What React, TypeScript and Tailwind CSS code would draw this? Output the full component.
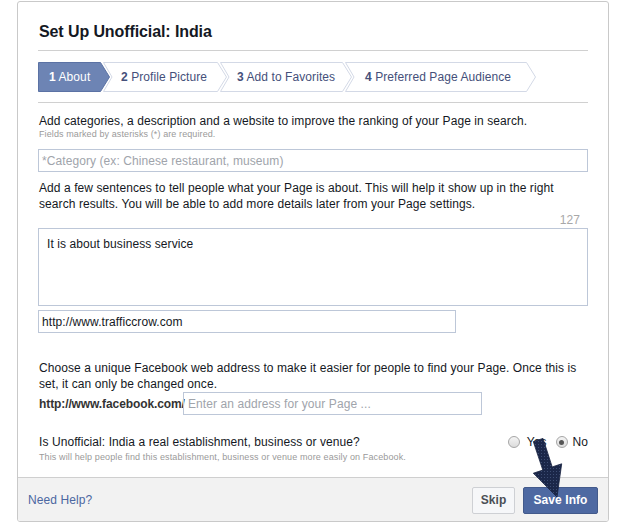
import React from 'react'

interface Step {
  num: string
  label: string
  width: number
  pl: number
}

const steps: Step[] = [
  { num: '1', label: 'About', width: 72, pl: 11 },
  { num: '2', label: 'Profile Picture', width: 124, pl: 18 },
  { num: '3', label: 'Add to Favorites', width: 132, pl: 17 },
  { num: '4', label: 'Preferred Page Audience', width: 191, pl: 20 },
]

function StepTab({ step, index }: { step: Step; index: number }) {
  const active = index === 0
  const W = step.width
  const pts =
    index === 0
      ? `0.5,0.5 ${W - 9.5},0.5 ${W - 0.5},15 ${W - 9.5},29.5 0.5,29.5`
      : `0.5,0.5 ${W - 9.5},0.5 ${W - 0.5},15 ${W - 9.5},29.5 0.5,29.5 9,15`
  return (
    <div
      className={`relative h-[30px] flex items-center shrink-0 ${index > 0 ? '-ml-[7px]' : ''}`}
      style={{ width: W, paddingLeft: step.pl }}
    >
      <svg className="absolute inset-0" width={W} height={30}>
        <polygon
          points={pts}
          fill={active ? '#6d84b4' : '#ffffff'}
          stroke={active ? '#5b72a4' : '#d3d9e6'}
          strokeWidth="1"
        />
      </svg>
      <span className={`relative text-[12px] whitespace-nowrap ${active ? 'text-white' : 'text-[#45507a]'}`}>
        <span className="font-bold">{step.num}</span> {step.label}
      </span>
    </div>
  )
}

function Radio({ checked }: { checked?: boolean }) {
  return (
    <span className="w-[12px] h-[12px] rounded-full border border-[#a6a6a6] bg-gradient-to-b from-[#f4f4f4] to-[#dcdcdc] flex items-center justify-center">
      {checked && <span className="w-[5px] h-[5px] rounded-full bg-[#555]" />}
    </span>
  )
}

export default function App() {
  return (
    <div className="relative w-[624px] h-[523px] bg-white pt-px pl-[17px] font-['Liberation_Sans',Arial,sans-serif] text-[#141823] tracking-[0.08px]">
      <div className="w-[592px] h-[521px] border border-[#c9c9c9] rounded-[3px] flex flex-col overflow-hidden">
        {/* Header + body */}
        <div className="flex-1 px-[20px]">
          <h2 className="pt-[20px] pb-[8px] text-[16px] leading-[20px] font-bold tracking-[-0.1px] border-b border-[#d0d0d0] pl-px">
            Set Up Unofficial: India
          </h2>

          {/* Steps */}
          <div className="pt-[11px] pb-[10px] border-b border-[#d0d0d0] flex">
            {steps.map((s, i) => (
              <StepTab key={s.num} step={s} index={i} />
            ))}
          </div>

          <p className="mt-[10px] text-[12px] leading-[16px] pl-px">
            Add categories, a description and a website to improve the ranking of your Page in search.
          </p>
          <p className="text-[9px] leading-[11px] tracking-[0.1px] text-[#9a9a9a] pl-px">
            Fields marked by asterisks (*) are required.
          </p>

          <div className="mt-[9px] h-[23px] border border-[#bdc7d8] px-[3px] flex items-center text-[12px] text-[#a0a4ab]">
            *Category (ex: Chinese restaurant, museum)
          </div>

          <p className="mt-[8px] text-[12px] leading-[16px] pl-px">
            Add a few sentences to tell people what your Page is about. This will help it show up in the right search
            results. You will be able to add more details later from your Page settings.
          </p>
          <div className="text-right pr-[8px] text-[12px] leading-[16px] text-[#a8a8a8]">127</div>
          <div className="h-[78px] border border-[#bdc7d8] pl-[8px] pt-[7px] text-[12px] leading-[16px]">
            It is about business service
          </div>

          <div className="mt-[4px] w-[418px] h-[23px] border border-[#bdc7d8] px-[3px] flex items-center text-[12px]">
            http://www.trafficcrow.com
          </div>

          <p className="mt-[27px] text-[12px] leading-[16px] pl-px">
            Choose a unique Facebook web address to make it easier for people to find your Page. Once this is set, it
            can only be changed once.
          </p>
          <div className="flex items-center h-[23px]">
            <span className="w-[145px] shrink-0 pl-px text-[12px] font-bold tracking-[-0.1px] whitespace-nowrap text-[#333]">
              http://www.facebook.com/
            </span>
            <div className="w-[299px] h-[23px] border border-[#bdc7d8] px-[4px] flex items-center text-[12px] text-[#a0a4ab]">
              Enter an address for your Page ...
            </div>
          </div>

          <div className="mt-[19px] flex items-start justify-between">
            <div className="pl-px">
              <p className="text-[12px] leading-[16px]">Is Unofficial: India a real establishment, business or venue?</p>
              <p className="mt-px text-[9px] leading-[12px] tracking-[0.12px] text-[#9a9a9a]">
                This will help people find this establishment, business or venue more easily on Facebook.
              </p>
            </div>
            <div className="flex items-center h-[16px] text-[12px]">
              <Radio />
              <span className="ml-[7px]">Yes</span>
              <span className="ml-[9px]">
                <Radio checked />
              </span>
              <span className="ml-[5px]">No</span>
            </div>
          </div>
        </div>

        {/* Footer */}
        <div className="h-[44px] border-t border-[#cfcfcf] bg-[#f2f2f2] flex items-center justify-between pl-[10px] pr-[10px]">
          <span className="text-[12px] text-[#4b67a1]">Need Help?</span>
          <div className="flex items-center gap-[8px] pt-px">
            <button className="h-[27px] w-[43px] border border-[#ced0d4] rounded-[2px] bg-[#f6f7f9] text-[12px] font-bold text-[#4b4f56]">
              Skip
            </button>
            <button className="h-[27px] w-[75px] border border-[#435a8b] rounded-[2px] bg-[#4e69a2] text-[12px] font-bold text-white">
              Save Info
            </button>
          </div>
        </div>
      </div>

      {/* Annotation arrow */}
      <svg className="absolute left-[520px] top-[432px]" width="60" height="70" viewBox="0 0 60 70">
        <defs>
          <pattern id="dots" width="3" height="3" patternUnits="userSpaceOnUse">
            <rect width="3" height="3" fill="#1b2749" />
            <rect width="1" height="1" fill="#3d4d73" />
          </pattern>
        </defs>
        <polygon
          points="23,6.4 32.2,34.9 41.7,31.8 37,65 13.3,41.2 22.8,38.1 13.3,9.6"
          fill="url(#dots)"
          stroke="#16213f"
          strokeWidth="0.8"
        />
      </svg>
    </div>
  )
}
